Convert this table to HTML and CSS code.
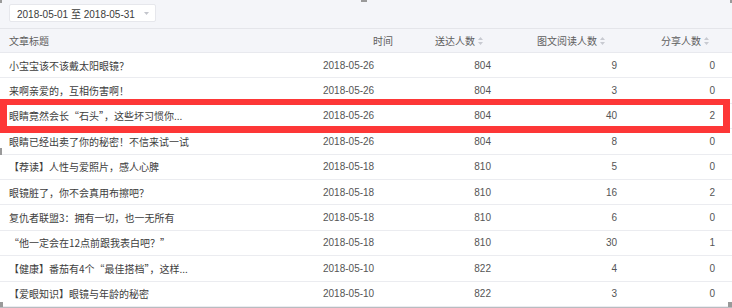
FILE: index.html
```html
<!DOCTYPE html>
<html lang="zh-CN">
<head>
<meta charset="utf-8">
<title>文章数据</title>
<link rel="stylesheet" href="styles.css">
</head>
<body>
<div class="page">
  <div class="toolbar">
    <div class="date-picker">
      <span class="date-text">2018-05-01 至 2018-05-31</span>
      <svg class="caret" width="5" height="3" viewBox="0 0 5 3"><path d="M0 0H5L2.5 3Z" fill="#c3c5cc"/></svg>
    </div>
  </div>
  <div class="table">
    <div class="row head">
      <div class="cell title">文章标题</div>
      <div class="cell time-h">时间</div>
      <div class="cell num-h h1">送达人数<svg class="sort" width="5" height="8" viewBox="0 0 5 8"><path d="M2.5 0L5 3H0Z M0 5H5L2.5 8Z" fill="#c8cad1"/></svg></div>
      <div class="cell num-h h2">图文阅读人数<svg class="sort" width="5" height="8" viewBox="0 0 5 8"><path d="M2.5 0L5 3H0Z M0 5H5L2.5 8Z" fill="#c8cad1"/></svg></div>
      <div class="cell num-h h3">分享人数<svg class="sort" width="5" height="8" viewBox="0 0 5 8"><path d="M2.5 0L5 3H0Z M0 5H5L2.5 8Z" fill="#c8cad1"/></svg></div>
      <div class="cell"></div>
    </div>

    <div class="row">
      <div class="cell title">小宝宝该不该戴太阳眼镜？</div>
      <div class="cell time">2018-05-26</div>
      <div class="cell num">804</div>
      <div class="cell num">9</div>
      <div class="cell num n3">0</div>
      <div class="cell"></div>
    </div>
    <div class="row">
      <div class="cell title">来啊亲爱的，互相伤害啊！</div>
      <div class="cell time">2018-05-26</div>
      <div class="cell num">804</div>
      <div class="cell num">3</div>
      <div class="cell num n3">0</div>
      <div class="cell"></div>
    </div>
    <div class="row marked">
      <div class="cell title">眼睛竟然会长“石头”，这些坏习惯你...</div>
      <div class="cell time">2018-05-26</div>
      <div class="cell num">804</div>
      <div class="cell num">40</div>
      <div class="cell num n3">2</div>
      <div class="cell"></div>
    </div>
    <div class="row">
      <div class="cell title">眼睛已经出卖了你的秘密！不信来试一试</div>
      <div class="cell time">2018-05-26</div>
      <div class="cell num">804</div>
      <div class="cell num">8</div>
      <div class="cell num n3">0</div>
      <div class="cell"></div>
    </div>
    <div class="row">
      <div class="cell title">【荐读】人性与爱照片，感人心脾</div>
      <div class="cell time">2018-05-18</div>
      <div class="cell num">810</div>
      <div class="cell num">5</div>
      <div class="cell num n3">0</div>
      <div class="cell"></div>
    </div>
    <div class="row">
      <div class="cell title">眼镜脏了，你不会真用布擦吧？</div>
      <div class="cell time">2018-05-18</div>
      <div class="cell num">810</div>
      <div class="cell num">16</div>
      <div class="cell num n3">2</div>
      <div class="cell"></div>
    </div>
    <div class="row">
      <div class="cell title">复仇者联盟3：拥有一切，也一无所有</div>
      <div class="cell time">2018-05-18</div>
      <div class="cell num">810</div>
      <div class="cell num">6</div>
      <div class="cell num n3">0</div>
      <div class="cell"></div>
    </div>
    <div class="row">
      <div class="cell title">“他一定会在12点前跟我表白吧？”</div>
      <div class="cell time">2018-05-18</div>
      <div class="cell num">810</div>
      <div class="cell num">30</div>
      <div class="cell num n3">1</div>
      <div class="cell"></div>
    </div>
    <div class="row">
      <div class="cell title">【健康】番茄有4个“最佳搭档”，这样...</div>
      <div class="cell time">2018-05-10</div>
      <div class="cell num">822</div>
      <div class="cell num">4</div>
      <div class="cell num n3">0</div>
      <div class="cell"></div>
    </div>
    <div class="row">
      <div class="cell title">【爱眼知识】眼镜与年龄的秘密</div>
      <div class="cell time">2018-05-10</div>
      <div class="cell num">822</div>
      <div class="cell num">3</div>
      <div class="cell num n3">0</div>
      <div class="cell"></div>
    </div>
  </div>

  <span class="handle h-tl"></span>
  <span class="handle h-tm"></span>
  <span class="handle h-tr"></span>
  <span class="handle h-ml"></span>
  <span class="handle h-bl"></span>
  <span class="handle h-br"></span>
  <span class="frame-bottom"></span>
</div>
</body>
</html>
```

FILE: styles.css
```css
* {
  box-sizing: border-box;
}

html, body {
  margin: 0;
  padding: 0;
}

body {
  background: #f4f5f9;
  font-family: "Liberation Sans", "Noto Sans CJK SC", sans-serif;
  font-size: 10px;
  color: #444;
}

.page {
  position: relative;
  width: 732px;
  height: 308px;
  overflow: hidden;
  background: #f4f5f9;
}

.toolbar {
  height: 28px;
  padding: 4px 9px;
  display: flex;
  align-items: flex-start;
}

.date-picker {
  width: 147px;
  height: 18px;
  background: #fff;
  border: 1px solid #e6e7ec;
  border-radius: 2px;
  display: flex;
  align-items: center;
  padding-left: 7px;
  color: #3c3c3c;
  font-family: "Liberation Sans", "Noto Sans CJK SC", sans-serif;
  font-size: 10px;
}

.date-text {
  flex: 1;
  white-space: nowrap;
}

.caret {
  margin-right: 6px;
  margin-top: 1px;
}

.table {
  border-top: 1px solid #e4e5ea;
}

.row {
  display: grid;
  grid-template-columns: 323px 72px 97px 126px 98px 16px;
  height: 25.4px;
  background: #fff;
  border-bottom: 1px solid #ebecf0;
}

.row.head {
  height: 24px;
  background: #f4f5f9;
  border-bottom: 1px solid #e8e9ee;
  color: #5e5e5e;
}

.cell {
  display: flex;
  align-items: center;
  white-space: nowrap;
  overflow: hidden;
}

.title {
  padding-left: 9px;
  font-family: "Noto Sans CJK SC", sans-serif;
  color: #3d3d3d;
}

.head .title {
  color: #5e5e5e;
}

.time {
  color: #555;
}

.time-h {
  justify-content: flex-end;
  padding-right: 2px;
  font-family: "Noto Sans CJK SC", sans-serif;
}

.num {
  justify-content: flex-end;
  color: #555;
  padding-right: 1px;
}

.n3 {
  padding-right: 1px;
}

.num-h {
  justify-content: flex-end;
  font-family: "Noto Sans CJK SC", sans-serif;
}

.h1 { padding-right: 9px; }
.h2 { padding-right: 13px; }
.h3 { padding-right: 7px; }

.sort {
  margin-left: 3px;
}

.marked {
  position: relative;
}

.marked::after {
  content: "";
  position: absolute;
  top: -5px;
  bottom: -5px;
  left: 0;
  right: 2px;
  border: 7px solid #fd3737;
  border-top-width: 6px;
  pointer-events: none;
}

.handle {
  position: absolute;
  background: #9a9a9a;
}

.h-tl { left: 0; top: 0; width: 2px; height: 3px; }
.h-tm { left: 361px; top: 0; width: 6px; height: 2px; }
.h-tr { left: 730px; top: 0; width: 2px; height: 3px; }
.h-ml { left: 0; top: 148px; width: 2px; height: 7px; }
.h-bl { left: 0; top: 302px; width: 3px; height: 6px; }
.h-br { left: 728px; top: 302px; width: 4px; height: 6px; }

.frame-bottom {
  position: absolute;
  left: 0;
  right: 0;
  top: 307px;
  height: 1px;
  background: #b9bbc0;
}
```
